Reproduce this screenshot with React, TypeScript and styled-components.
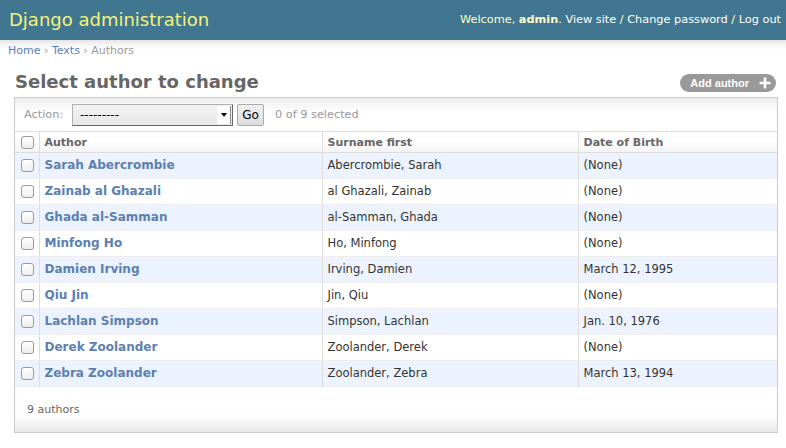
import React from 'react';
import styled, { createGlobalStyle } from 'styled-components';

const GlobalStyle = createGlobalStyle`
    html, body {
        margin: 0;
        padding: 0;
        background: #fff;
    }
    body {
        font-family: 'DejaVu Sans', Verdana, sans-serif;
        font-size: 12px;
        color: #333;
    }
    a {
        text-decoration: none;
    }
`;

const Header = styled.div`
    height: 40px;
    background: #417690;
    display: flex;
    justify-content: space-between;
    align-items: center;
    padding: 0 5px 0 9px;
`;

const Branding = styled.h1`
    margin: 0;
    font-size: 18px;
    font-weight: normal;
    line-height: 22px;
    color: #f4f379;
`;

const UserTools = styled.div`
    font-size: 11.3px;
    color: #ffc;
    line-height: 14px;

    strong {
        font-weight: bold;
    }

    a {
        color: #fff;
    }
`;

const Breadcrumbs = styled.div`
    height: 20px;
    padding: 1px 8px 0 8px;
    font-size: 11px;
    line-height: 20px;
    color: #999;
    background: linear-gradient(to bottom, #e4e4e4 0px, #f6f6f6 5px, #fff 10px);

    a {
        color: #5b80b2;
    }
`;

const Content = styled.div`
    padding: 0 8px 0 14px;
`;

const ContentHead = styled.div`
    display: flex;
    justify-content: space-between;
    align-items: center;
    margin: 10px 0 4px 0;
`;

const Title = styled.h1`
    margin: 0 0 0 1px;
    font-size: 18px;
    line-height: 22px;
    font-weight: bold;
    color: #666;
`;

const AddLink = styled.a`
    display: flex;
    align-items: center;
    gap: 9px;
    height: 18px;
    margin: 2px 2px 0 0;
    padding: 0 4px 0 10px;
    border-radius: 9px;
    background: #999;
    color: #fff;
    font-family: 'Liberation Sans', Arial, sans-serif;
    font-weight: bold;
    font-size: 11px;
`;

const Module = styled.div`
    border: 1px solid #ccc;
    background: #fff;
`;

const Actions = styled.div`
    display: flex;
    align-items: center;
    height: 22px;
    padding: 6px 9px 5px 9px;
    border-bottom: 1px solid #ddd;
    background: linear-gradient(to bottom, #ececec 0px, #fafafa 10px, #fff 16px);
    color: #999;
    font-size: 11.3px;
`;

const ActionLabel = styled.span`
    width: 48px;
    margin-top: -1px;
`;

const FakeSelect = styled.div`
    position: relative;
    box-sizing: border-box;
    width: 161px;
    height: 22px;
    border: 1px solid #b0b0b0;
    border-right-color: #666;
    border-bottom-color: #666;
    background: linear-gradient(to bottom, #f2f2f2, #e8e8e8);
    color: #000;
    font-size: 12px;
    line-height: 20px;
    padding-left: 7px;
`;

const SelectArrow = styled.span`
    position: absolute;
    right: 1px;
    top: 1px;
    bottom: 1px;
    width: 13px;
    background: #fff;
    border-right: 1px solid #888;
    display: flex;
    align-items: center;
    justify-content: center;

    &::after {
        content: '';
        border-left: 3px solid transparent;
        border-right: 3px solid transparent;
        border-top: 4px solid #000;
    }
`;

const GoButton = styled.button`
    box-sizing: border-box;
    height: 22px;
    width: 27px;
    margin-left: 4px;
    padding: 0;
    border: 1px solid #aaa;
    border-radius: 2px;
    background: linear-gradient(to bottom, #f0f0f0, #dcdcdc);
    font-family: 'DejaVu Sans', sans-serif;
    font-size: 12px;
    color: #000;
`;

const Counter = styled.span`
    margin: -1px 0 0 11px;
    color: #999;
`;

const Table = styled.table`
    width: 100%;
    border-collapse: collapse;
    table-layout: fixed;
`;

const HeadCell = styled.th`
    padding: 4px 5px 3px 5px;
    line-height: 13px;
    font-size: 11px;
    font-weight: bold;
    color: #666;
    text-align: left;
    border-bottom: 1px solid #ddd;
    border-left: 1px solid #ddd;
    background: linear-gradient(to bottom, #fff 40%, #f3f3f3);

    &:first-child {
        border-left: none;
    }
`;

const Row = styled.tr<{ $odd: boolean }>`
    background: ${(p) => (p.$odd ? '#edf3fe' : '#fff')};
`;

const Cell = styled.td`
    padding: 6px 5px;
    line-height: 13px;
    font-size: 11.5px;
    color: #333;
    border-bottom: 1px solid #eee;
    border-left: 1px solid #ddd;

    &:first-child {
        border-left: none;
    }
`;

const NameCell = styled(Cell).attrs({ as: 'th' })`
    text-align: left;
    font-size: 12px;
    font-weight: bold;

    a {
        color: #5b80b2;
    }
`;

const CheckCell = styled.td`
    padding: 0 0 0 6px;
    border-bottom: 1px solid #eee;
`;

const Check = styled.span`
    display: block;
    box-sizing: border-box;
    width: 13px;
    height: 13px;
    border: 1px solid #9a9a9a;
    border-radius: 3px;
    background: linear-gradient(to bottom, #fff, #ededed);
`;

const Paginator = styled.div`
    height: 45px;
    line-height: 45px;
    padding-left: 12px;
    font-size: 11px;
    color: #666;
    background: linear-gradient(to bottom, #fff 60%, #e9e9e9);
`;

const PlusIcon = () => (
    <svg width="14" height="14" viewBox="0 0 14 14">
        <path d="M7 1.5v11M1.5 7h11" stroke="#fff" strokeWidth="2.6" />
    </svg>
);

const authors = [
    { name: 'Sarah Abercrombie', surname: 'Abercrombie, Sarah', born: '(None)' },
    { name: 'Zainab al Ghazali', surname: 'al Ghazali, Zainab', born: '(None)' },
    { name: 'Ghada al-Samman', surname: 'al-Samman, Ghada', born: '(None)' },
    { name: 'Minfong Ho', surname: 'Ho, Minfong', born: '(None)' },
    { name: 'Damien Irving', surname: 'Irving, Damien', born: 'March 12, 1995' },
    { name: 'Qiu Jin', surname: 'Jin, Qiu', born: '(None)' },
    { name: 'Lachlan Simpson', surname: 'Simpson, Lachlan', born: 'Jan. 10, 1976' },
    { name: 'Derek Zoolander', surname: 'Zoolander, Derek', born: '(None)' },
    { name: 'Zebra Zoolander', surname: 'Zoolander, Zebra', born: 'March 13, 1994' },
];

const App: React.FC = () => (
    <>
        <GlobalStyle />
        <Header>
            <Branding>Django administration</Branding>
            <UserTools>
                Welcome, <strong>admin</strong>. <a href="#">View site</a> / <a href="#">Change password</a> /{' '}
                <a href="#">Log out</a>
            </UserTools>
        </Header>
        <Breadcrumbs>
            <a href="#">Home</a> › <a href="#">Texts</a> › Authors
        </Breadcrumbs>
        <Content>
            <ContentHead>
                <Title>Select author to change</Title>
                <AddLink href="#">
                    Add author
                    <PlusIcon />
                </AddLink>
            </ContentHead>
            <Module>
                <Actions>
                    <ActionLabel>Action:</ActionLabel>
                    <FakeSelect>
                        ---------
                        <SelectArrow />
                    </FakeSelect>
                    <GoButton>Go</GoButton>
                    <Counter>0 of 9 selected</Counter>
                </Actions>
                <Table>
                    <colgroup>
                        <col style={{ width: 24 }} />
                        <col style={{ width: 283 }} />
                        <col style={{ width: 256 }} />
                        <col />
                    </colgroup>
                    <thead>
                        <tr>
                            <HeadCell style={{ paddingLeft: 6 }}>
                                <Check />
                            </HeadCell>
                            <HeadCell>Author</HeadCell>
                            <HeadCell>Surname first</HeadCell>
                            <HeadCell>Date of Birth</HeadCell>
                        </tr>
                    </thead>
                    <tbody>
                        {authors.map((a, i) => (
                            <Row key={a.name} $odd={i % 2 === 0}>
                                <CheckCell>
                                    <Check />
                                </CheckCell>
                                <NameCell>
                                    <a href="#">{a.name}</a>
                                </NameCell>
                                <Cell>{a.surname}</Cell>
                                <Cell>{a.born}</Cell>
                            </Row>
                        ))}
                    </tbody>
                </Table>
                <Paginator>9 authors</Paginator>
            </Module>
        </Content>
    </>
);

export default App;
